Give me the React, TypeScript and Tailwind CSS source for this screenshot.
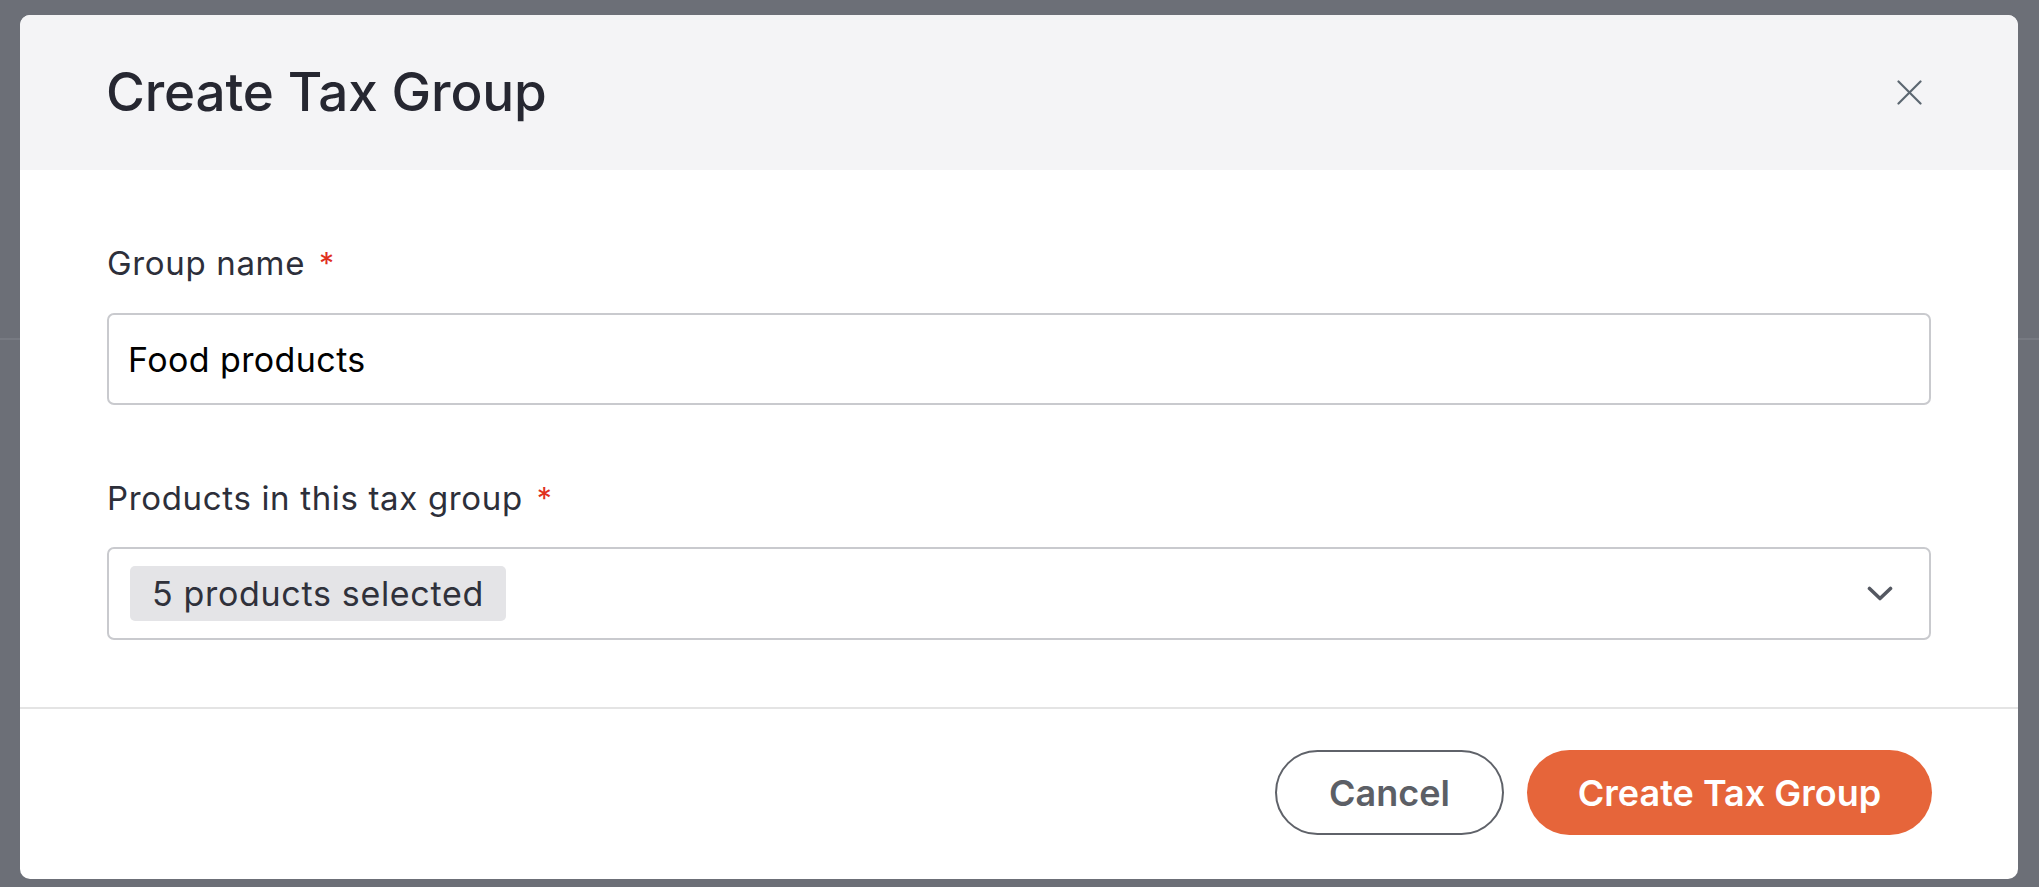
import React from "react";

const font = { fontFamily: "Inter, 'Noto Sans', sans-serif" };

export default function App() {
  return (
    <div className="relative w-full h-[887px] bg-[#6c6f77] overflow-hidden" style={font}>
      <div className="h-[340px] border-b-2 border-[#777a82]" />
      <div className="absolute left-[20px] top-[15px] w-[1998px] h-[864px] bg-white rounded-[10px] overflow-hidden flex flex-col">
        <div className="h-[155px] shrink-0 bg-[#f4f4f6] flex items-center justify-between pl-[86px] pr-[96px]">
          <h1 className="text-[53px] leading-none font-medium text-[#262731] tracking-[-0.003em]">Create Tax Group</h1>
          <button className="w-[25px] h-[25px] flex items-center justify-center text-[#5b6670]">
            <svg width="25" height="25" viewBox="0 0 25 25" fill="none" stroke="currentColor" strokeWidth="2.2" strokeLinecap="round">
              <line x1="1.5" y1="1.5" x2="23.5" y2="23.5" />
              <line x1="23.5" y1="1.5" x2="1.5" y2="23.5" />
            </svg>
          </button>
        </div>
        <div className="flex-1 px-[87px] pt-[73px] flex flex-col">
          <label className="flex items-center gap-[14px] text-[33px] leading-[40px] text-[#2d2f3a] tracking-[0.02em]">
            <span>Group name</span>
            <span className="text-[#e0301e] text-[30px]">*</span>
          </label>
          <div className="mt-[30px] h-[92px] border-2 border-[#c9cace] rounded-[7px] flex items-center pl-[19px]">
            <span className="text-[34px] font-normal text-black tracking-[0.012em]">Food products</span>
          </div>
          <label className="mt-[73px] flex items-center gap-[14px] text-[33px] leading-[40px] text-[#2d2f3a] tracking-[0.02em]">
            <span>Products in this tax group</span>
            <span className="text-[#e0301e] text-[30px]">*</span>
          </label>
          <div className="mt-[29px] h-[93px] border-2 border-[#c9cace] rounded-[7px] flex items-center justify-between pl-[21px] pr-[36px]">
            <span className="h-[55px] px-[22px] flex items-center bg-[#e4e4e7] rounded-[5px] text-[34px] text-[#2f313b] tracking-[0.02em]">5 products selected</span>
            <svg width="26" height="15" viewBox="0 0 26 15" fill="none" stroke="#545861" strokeWidth="3.6" strokeLinecap="round" strokeLinejoin="round">
              <polyline points="2.5,2.5 13,12.5 23.5,2.5" />
            </svg>
          </div>
        </div>
        <div className="h-[172px] shrink-0 border-t-2 border-[#e4e4e4] flex items-center justify-end gap-[23px] pr-[86px] pb-[3px]">
          <button className="w-[229px] h-[85px] rounded-full border-2 border-[#5f6269] text-[36px] font-semibold text-[#5c5f66]">Cancel</button>
          <button className="w-[405px] h-[85px] rounded-full bg-[#e6653a] text-[36px] font-semibold text-white">Create Tax Group</button>
        </div>
      </div>
    </div>
  );
}
